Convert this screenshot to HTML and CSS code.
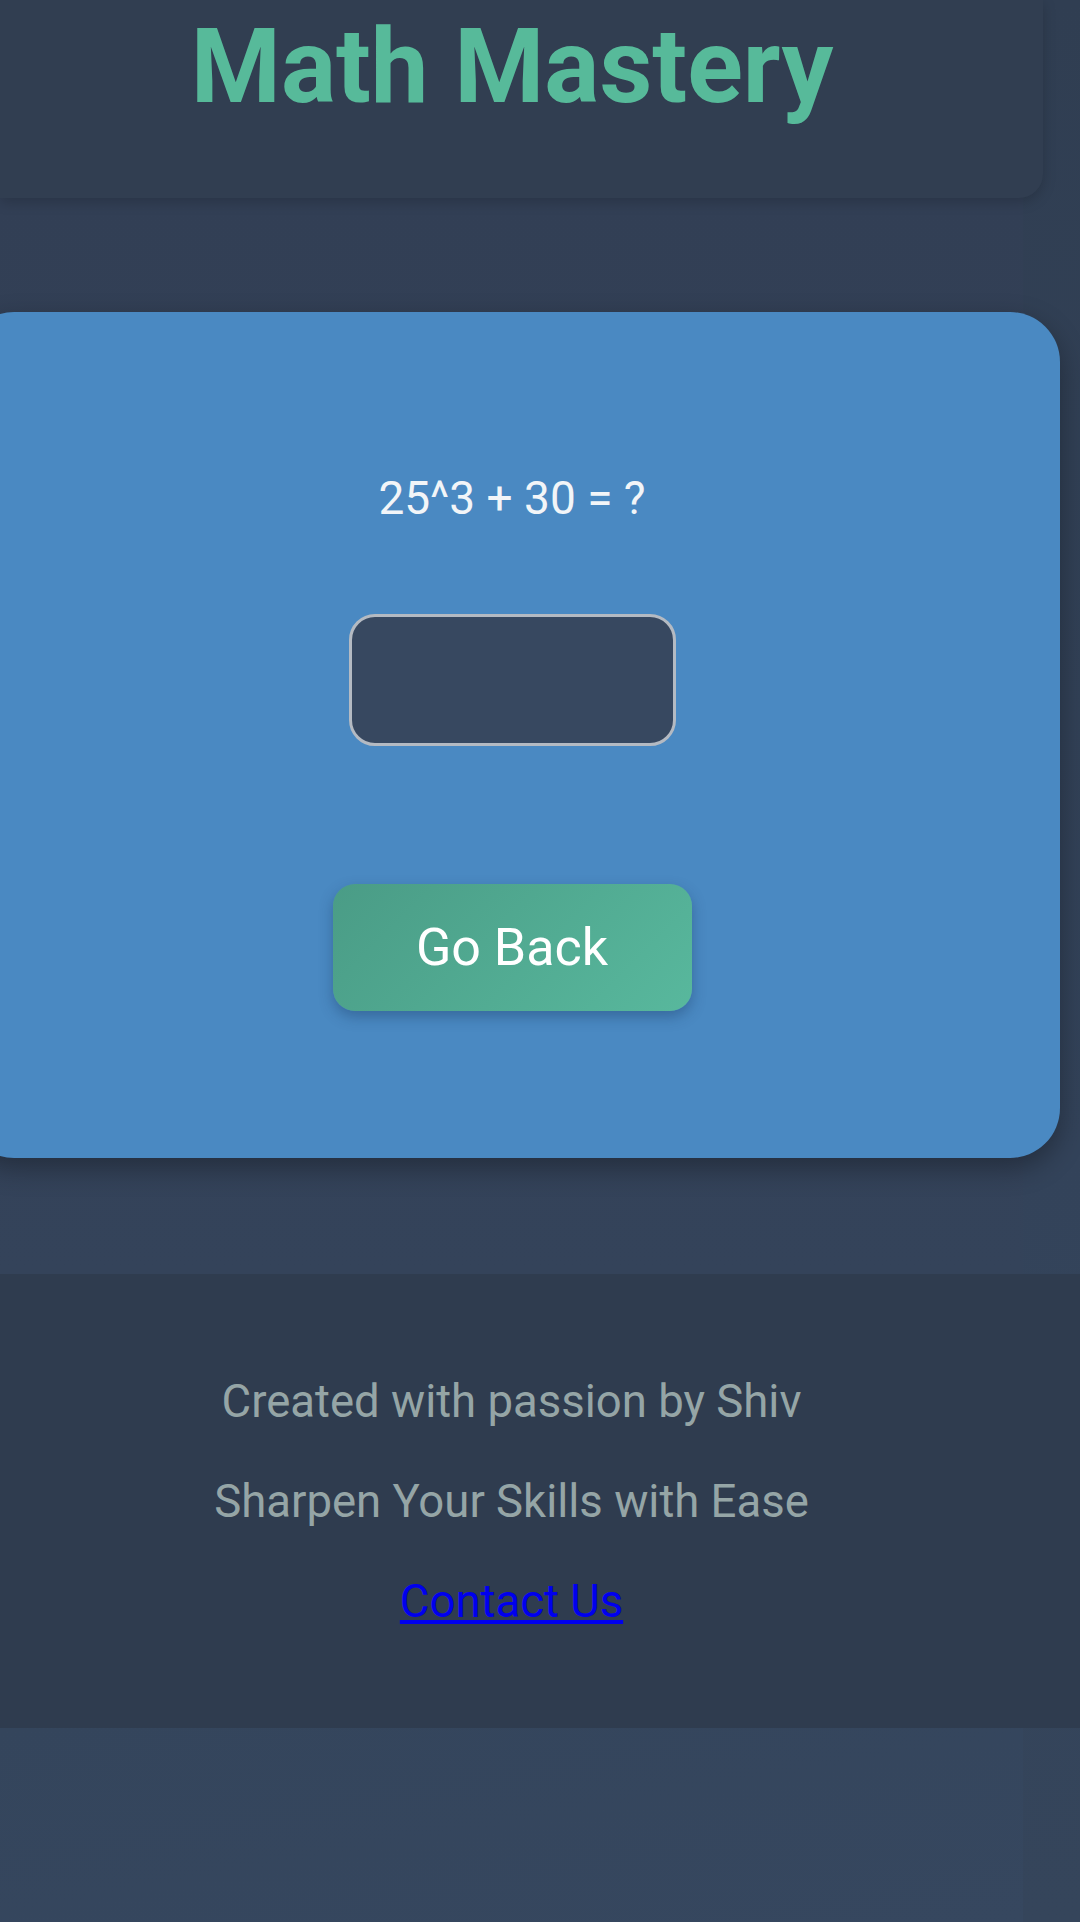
FILE: index.html
```html
<!DOCTYPE html>
<html lang="en">
<head>
<meta charset="utf-8">
<title>Math Mastery</title>
<link rel="stylesheet" href="styles.css">
</head>
<body>
<div class="page">
  <header class="top">
    <h1 class="title">Math Mastery</h1>
  </header>
  <main class="content">
    <section class="card">
      <p class="question">25^3 + 30 = ?</p>
      <input class="answer" type="text" aria-label="Answer">
      <button class="back" type="button">Go Back</button>
    </section>
  </main>
  <footer class="foot">
    <p class="foot-line">Created with passion by Shiv</p>
    <p class="foot-line">Sharpen Your Skills with Ease</p>
    <p class="foot-line"><a class="contact" href="#">Contact Us</a></p>
  </footer>
  <div class="tail"></div>
</div>
</body>
</html>
```
FILE: styles.css
```css
html {
  background: linear-gradient(180deg, #303e52 0%, #33435a 60%, #35455b 100%);
  min-height: 100%;
}
body {
  margin: 0;
  font-family: Roboto, "Noto Sans", sans-serif;
  overflow: hidden;
}
.page {
  width: 1023px;
  min-height: 1922px;
  display: flex;
  flex-direction: column;
  background: linear-gradient(170deg, #2f3c50 0%, #34445b 60%, #36475f 100%);
}
.top {
  position: relative;
  z-index: 2;
  width: 1043px;
  height: 198px;
  box-sizing: border-box;
  padding: 6px 19px 0 0;
  background: #313e51;
  border-radius: 0 0 24px 0;
  box-shadow: 0 4px 14px rgba(0, 0, 0, 0.18);
  text-align: center;
}
.title {
  margin: 0;
  font-size: 103px;
  font-weight: 700;
  line-height: 121px;
  color: #57ba9a;
}
.content {
  height: 1076px;
  box-sizing: border-box;
  padding-top: 114px;
  background: linear-gradient(180deg, #323f55 0%, #34435a 100%);
}
.card {
  width: 1096px;
  height: 846px;
  margin-left: -36px;
  box-sizing: border-box;
  padding-top: 159px;
  display: flex;
  flex-direction: column;
  align-items: center;
  background: #4a89c2;
  border-radius: 50px;
  box-shadow: 0 10px 28px rgba(0, 0, 0, 0.32);
}
.question {
  margin: 0;
  font-size: 46px;
  line-height: 54px;
  color: #f2f5f8;
}
.answer {
  margin-top: 89px;
  width: 327px;
  height: 132px;
  box-sizing: border-box;
  border: 3px solid #b4bac2;
  border-radius: 26px;
  background: #374860;
  outline: none;
  font-family: inherit;
  font-size: 46px;
  color: #fff;
  text-align: center;
}
.back {
  margin-top: 138px;
  width: 359px;
  height: 127px;
  border: none;
  border-radius: 22px;
  background: linear-gradient(135deg, #4a9c86 0%, #58b89d 100%);
  box-shadow: 0 6px 14px rgba(20, 50, 90, 0.35);
  font-family: inherit;
  font-size: 52px;
  color: #ffffff;
}
.foot {
  width: 1080px;
  height: 454px;
  box-sizing: border-box;
  padding: 55px 57px 0 0;
  background: #2f3c4f;
  text-align: center;
}
.foot-line {
  margin: 46px 0;
  font-size: 45.5px;
  line-height: 54px;
  color: #95a5a6;
}
.contact {
  color: #0000ee;
  text-decoration: underline;
}
.tail {
  flex: 1;
  background: linear-gradient(170deg, #34455c 0%, #36475f 100%);
}
```
